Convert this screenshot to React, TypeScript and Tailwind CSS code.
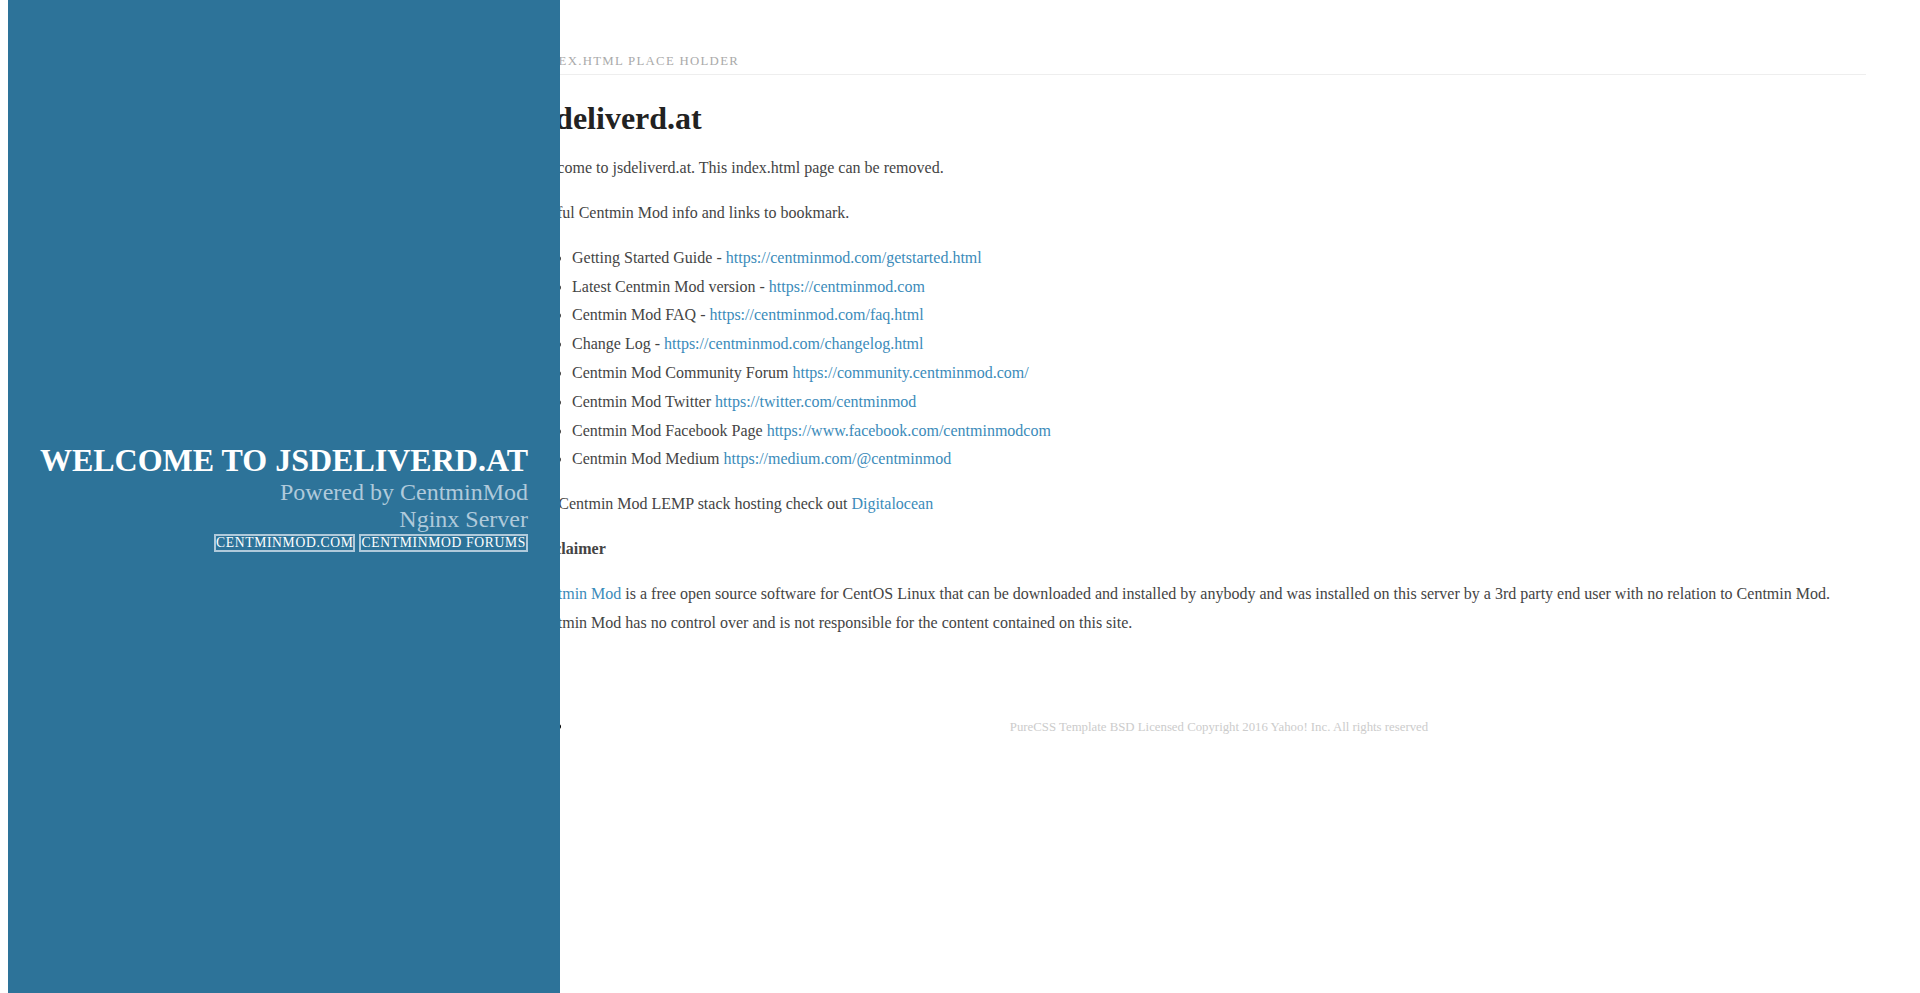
import React from 'react';

const links: { label: string; href: string }[] = [
  { label: 'Getting Started Guide - ', href: 'https://centminmod.com/getstarted.html' },
  { label: 'Latest Centmin Mod version - ', href: 'https://centminmod.com' },
  { label: 'Centmin Mod FAQ - ', href: 'https://centminmod.com/faq.html' },
  { label: 'Change Log - ', href: 'https://centminmod.com/changelog.html' },
  { label: 'Centmin Mod Community Forum ', href: 'https://community.centminmod.com/' },
  { label: 'Centmin Mod Twitter ', href: 'https://twitter.com/centminmod' },
  { label: 'Centmin Mod Facebook Page ', href: 'https://www.facebook.com/centminmodcom' },
  { label: 'Centmin Mod Medium ', href: 'https://medium.com/@centminmod' },
];

function Sidebar() {
  return (
    <div className="fixed top-0 bottom-0 left-2 w-[552px] bg-[#2d7399] text-white">
      <div className="pt-[442px] pr-8 text-right">
        <h1 className="m-0 text-[32px] leading-[36.8px] font-bold uppercase">Welcome to jsdeliverd.at</h1>
        <h2 className="m-0 text-[24px] leading-[27.6px] font-light text-[#b0cadb]">
          Powered by CentminMod
          <br />
          Nginx Server
        </h2>
        <nav>
          <ul className="m-0 p-0 list-none flex justify-end gap-[4px]">
            <li>
              <a
                href="#"
                className="block border-2 border-[#b0cadb] text-white uppercase text-[13.6px] leading-[14px] tracking-[0.05em]"
              >
                centminmod.com
              </a>
            </li>
            <li>
              <a
                href="#"
                className="block border-2 border-[#b0cadb] text-white uppercase text-[13.6px] leading-[14px] tracking-[0.05em]"
              >
                centminmod forums
              </a>
            </li>
          </ul>
        </nav>
      </div>
    </div>
  );
}

export default function App() {
  return (
    <div className="relative min-h-screen bg-white font-['Liberation_Serif',serif]">
      <div className="pl-[532px] pr-[54px]">
        {/* Post */}
        <div className="pt-[49px]">
          <h1 className="py-[5.1px] text-[12.8px] leading-[14.7px] uppercase tracking-[0.1em] text-[#aaa] border-b border-[#eee] font-medium">
            index.html place holder
          </h1>
          <section>
            <h2 className="mt-[24px] text-[32px] leading-[38.4px] font-bold text-[#222]">jsdeliverd.at</h2>
            <div className="mt-[17px] text-[16px] leading-[28.8px] text-[#444] flex flex-col gap-4">
              <p>Welcome to jsdeliverd.at. This index.html page can be removed.</p>
              <p>Useful Centmin Mod info and links to bookmark.</p>
              <ul className="list-disc pl-10">
                {links.map((l) => (
                  <li key={l.href}>
                    {l.label}
                    <a href="#" className="text-[#3b8bba]">
                      {l.href}
                    </a>
                  </li>
                ))}
              </ul>
              <p>
                For Centmin Mod LEMP stack hosting check out{' '}
                <a href="#" className="text-[#3b8bba]">
                  Digitalocean
                </a>
              </p>
              <p>
                <strong className="font-bold">Disclaimer</strong>
              </p>
              <p>
                <a href="#" className="text-[#3b8bba]">
                  Centmin Mod
                </a>{' '}
                is a free open source software for CentOS Linux that can be downloaded and installed by anybody and was
                installed on this server by a 3rd party end user with no relation to Centmin Mod.
                <br />
                Centmin Mod has no control over and is not responsible for the content contained on this site.
              </p>
            </div>
          </section>
        </div>

        {/* Footer */}
        <div className="mt-[79px] text-center">
          <ul className="list-disc pl-10 text-black">
            <li className="leading-[20px]">
              <a href="#" className="text-[12.8px] text-[#ccc]">
                PureCSS Template BSD Licensed Copyright 2016 Yahoo! Inc. All rights reserved
              </a>
            </li>
          </ul>
        </div>
      </div>
      <Sidebar />
    </div>
  );
}
